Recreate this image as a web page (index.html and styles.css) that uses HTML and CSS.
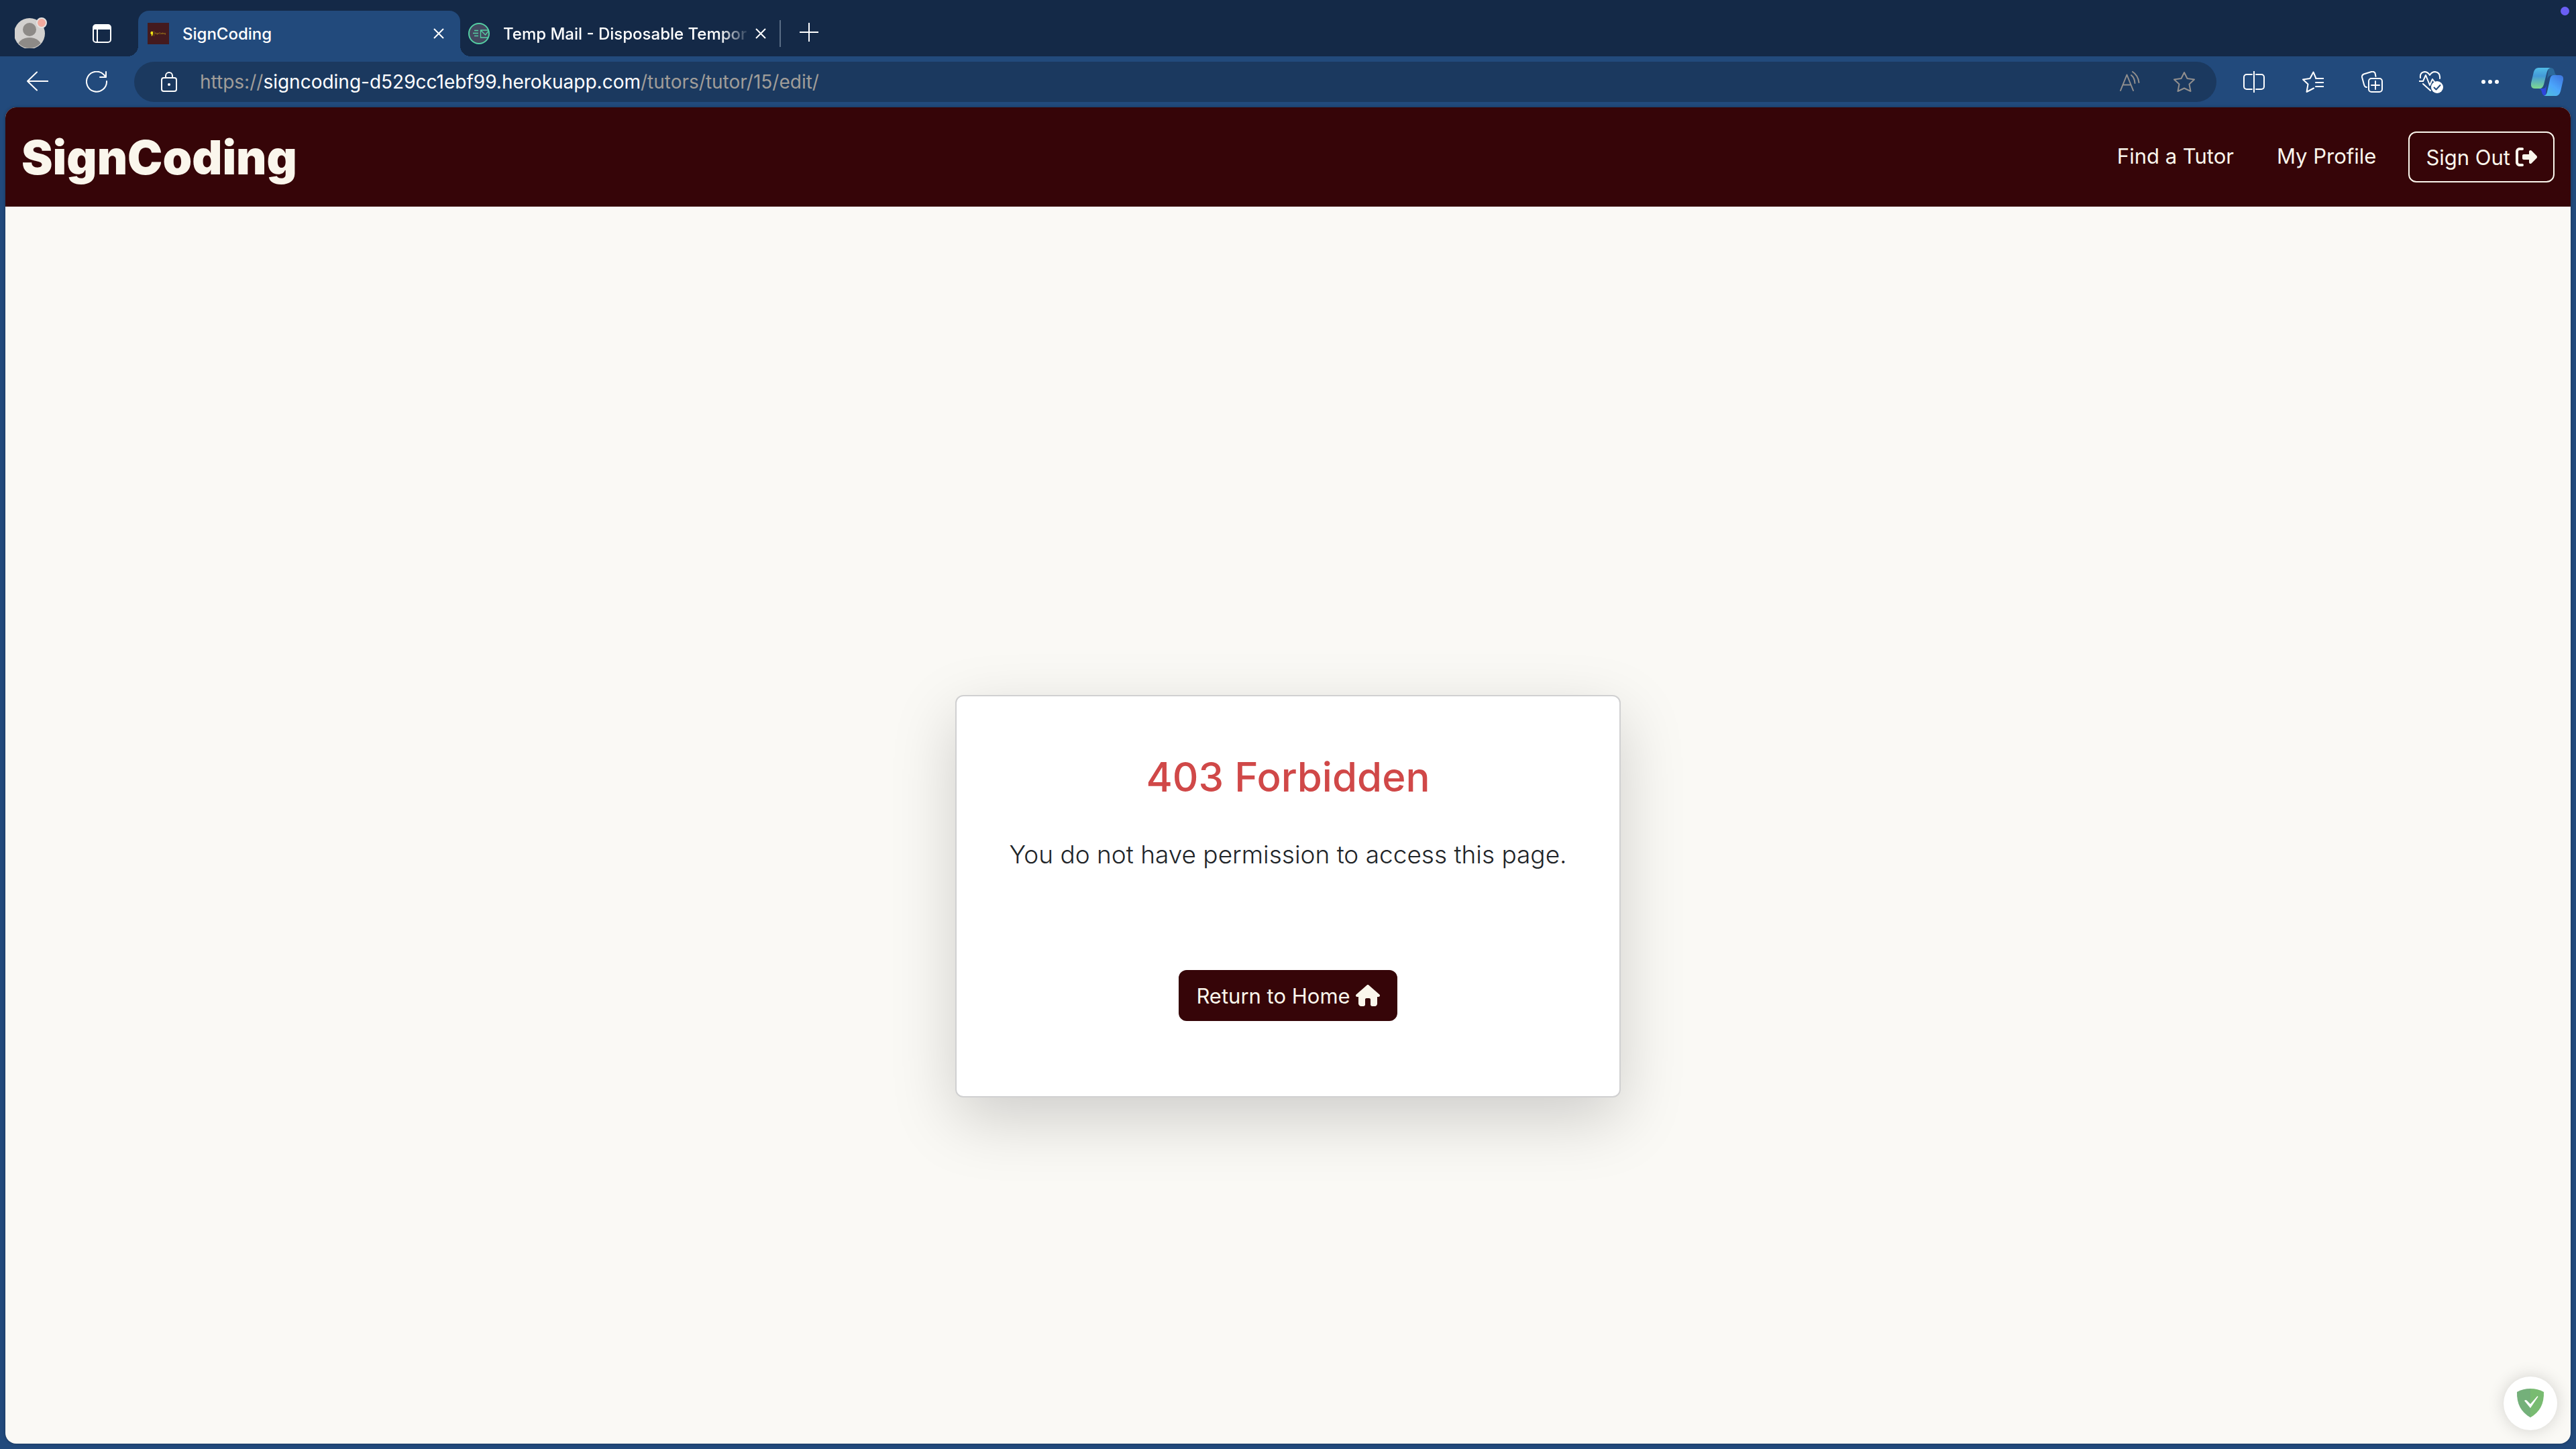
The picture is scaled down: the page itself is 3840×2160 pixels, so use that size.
FILE: index.html
```html
<!DOCTYPE html>
<html lang="en">
<head>
<meta charset="utf-8">
<meta name="viewport" content="width=device-width, initial-scale=1">
<title>SignCoding</title>
<link rel="stylesheet" href="styles.css">
</head>
<body>
<div class="tab-strip">
  <button class="profile" aria-label="Profile">
    <svg width="48" height="48" viewBox="0 0 48 48">
      <defs><clipPath id="face"><circle cx="22" cy="26" r="22"/></clipPath></defs>
      <circle cx="22" cy="26" r="23" fill="#d2d0ce"/>
      <g clip-path="url(#face)" fill="#8d8a87"><circle cx="22" cy="20" r="10"/><ellipse cx="22" cy="46" rx="18" ry="14"/></g>
      <circle cx="40" cy="10" r="7" fill="#f1a99d" stroke="#e4e2e0" stroke-width="2"/>
    </svg>
  </button>
  <button class="workspaces" aria-label="Tab actions">
    <svg width="28" height="28" viewBox="0 0 28 28"><rect x="1" y="1" width="26" height="26" rx="4" fill="none" stroke="#fff" stroke-width="2"/><path d="M1 8V5a4 4 0 0 1 4-4h18a4 4 0 0 1 4 4v3z" fill="#fff"/><path d="M7 8v19" stroke="#fff" stroke-width="2"/></svg>
  </button>
  <div class="tab tab-active">
    <svg class="favicon" width="32" height="32" viewBox="0 0 32 32"><rect width="32" height="32" fill="#441a1e"/><path d="M4.500 14q2-2 3.500-.5v3l-1 3H5.500l.5-2-1.500-1z" fill="#f5ea14"/><path d="M9.500 12v8" stroke="#8a6b18" stroke-width=".6"/><text x="10.500" y="17" class="favicon-text">SignCoding</text></svg>
    <span class="tab-title">SignCoding</span>
    <button class="close" aria-label="Close tab"><svg width="16" height="16" viewBox="0 0 16 16"><path d="M1 1l14 14M15 1L1 15"/></svg></button>
  </div>
  <div class="tab">
    <svg class="favicon" width="32" height="32" viewBox="0 0 32 32"><circle cx="16" cy="16" r="15" fill="#43485f" stroke="#55cfa4" stroke-width="2"/><path d="M9 11.500h6M7 15.500h8M9 19.500h6M30 11H18.500v11H30M18.500 11l7 7 5-6" fill="none" stroke="#55cfa4" stroke-width="1.300"/></svg>
    <span class="tab-title tab-title-fade">Temp Mail - Disposable Tempor</span>
    <button class="close" aria-label="Close tab"><svg width="16" height="16" viewBox="0 0 16 16"><path d="M1 1l14 14M15 1L1 15"/></svg></button>
  </div>
  <button class="new-tab" aria-label="New tab"><svg width="28" height="28" viewBox="0 0 28 28"><path d="M14 0v28M0 14h28"/></svg></button>
  <span class="status-dot"></span>
</div>

<div class="toolbar">
  <button class="tool" aria-label="Back"><svg width="32" height="32" viewBox="0 0 32 32"><path d="M15 1.500L1 15l14 13.500M1 15h31"/></svg></button>
  <button class="tool" aria-label="Reload"><svg width="32" height="32" viewBox="0 0 32 32"><path d="M31 15a15 15 0 1 1-4-9.500L30 9M30 1v8h-9"/></svg></button>
  <div class="omnibox">
    <svg width="24" height="30" viewBox="0 0 24 30"><rect x="1" y="9" width="22" height="20" rx="3"/><path d="M7 9V6a5 5 0 0 1 10 0v3"/><circle cx="12" cy="19" r="2" fill="#fff" stroke="none"/></svg>
    <div class="url" role="textbox" aria-label="Address bar"><span class="dim">https://</span><span>signcoding-d529cc1ebf99.herokuapp.com</span><span class="dim">/tutors/tutor/15/edit/</span></div>
    <button class="omni-action" aria-label="Read aloud"><svg width="32" height="32" viewBox="0 0 32 32"><path d="M1 29L10.500 5.500 20 29M4.500 20.500h12M17 6q5 4 5.500 12M19 1q8 5 9.500 16"/></svg></button>
    <button class="omni-action" aria-label="Add to favorites"><svg width="32" height="32" viewBox="0 0 32 32"><path d="M16 2l4.500 9L31 12.500l-7.500 7L25.500 30 16 25.500 6.500 30l2-10.500L1 12.500 11.500 11z"/></svg></button>
  </div>
  <button class="tool" aria-label="Split screen"><svg width="32" height="32" viewBox="0 0 32 32"><path d="M16 0v32M13 5H5a4 4 0 0 0-4 4v14a4 4 0 0 0 4 4h8M19 5h8a4 4 0 0 1 4 4v14a4 4 0 0 1-4 4h-8"/></svg></button>
  <button class="tool" aria-label="Favorites"><svg width="32" height="32" viewBox="0 0 32 32"><path d="M20.500 11l-4-9.500-5 9.500-10.500 1.500 7.500 7-2 11.500 10.500-5.500M20 11h12M20 17h12M20 23h12"/></svg></button>
  <button class="tool" aria-label="Collections"><svg width="32" height="32" viewBox="0 0 32 32"><rect x="11" y="11" width="20" height="20" rx="4"/><path d="M21 15v12M15 21h12M8 24q-3 0-4-4L1 9q-.500-3 2.500-4.500L15 1q4-1 5.500 2l1 5"/></svg></button>
  <button class="tool" aria-label="Browser essentials"><svg width="36" height="36" viewBox="0 0 36 36"><path d="M2 12Q1 4 8 3q5 0 8 5 3-5 8-5 8 1 7 10M0 17h6l4-9 6 15 4-9 3 4M6 21l11 10"/><circle cx="27" cy="26" r="9" fill="#fff" stroke="none"/><path d="M22.500 26.500l3 3 6-6.500" class="check"/></svg></button>
  <button class="tool" aria-label="Settings and more"><svg width="28" height="28" viewBox="0 0 28 28"><g fill="#fff" stroke="none"><circle cx="4" cy="14" r="3"/><circle cx="14" cy="14" r="3"/><circle cx="24" cy="14" r="3"/></g></svg></button>
  <button class="copilot" aria-label="Copilot">
    <svg width="48" height="42" viewBox="0 0 48 42">
      <defs>
        <linearGradient id="cg" x2="0" y2="1"><stop stop-color="#51bce6"/><stop offset=".4" stop-color="#449ad8"/><stop offset="1" stop-color="#7fd98f"/></linearGradient>
        <linearGradient id="cb" x1="1" x2=".3" y2="1"><stop stop-color="#3d72dc"/><stop offset=".6" stop-color="#4ba5fb"/><stop offset="1" stop-color="#50b9e2"/></linearGradient>
      </defs>
      <path d="M26 0h3q5 0 6 6 1 5 4 5h-8q-5 0-7 6z" fill="#2c6a9b"/>
      <path d="M10 31h8q3 0 4-3l1-4-1 18q-5 0-6-6-1-5-6-5z" fill="#2e45dc"/>
      <path d="M11 0h18q-4 1-5.500 7L19 25q-2 6-6 6H6q-7 0-6-8L4 6q2-6 7-6z" fill="url(#cg)"/>
      <path d="M33 11h9q7 0 6 7l-4 17q-2 7-7 7H19q4-1 5-6l4-18q1-7 5-7z" fill="url(#cb)"/>
    </svg>
  </button>
</div>

<div class="viewport">
  <header class="site-header">
    <a class="brand" href="#">SignCoding</a>
    <nav class="site-nav">
      <a class="nav-link" href="#">Find a Tutor</a>
      <a class="nav-link" href="#">My Profile</a>
      <button class="btn btn-outline">Sign Out <svg width="32" height="32" viewBox="0 0 512 512"><path d="M377.900 105.900L500.700 228.700c7.200 7.200 11.300 17.100 11.300 27.300s-4.100 20.100-11.300 27.300L377.900 406.100c-6.400 6.400-15 9.900-24 9.900c-18.700 0-33.900-15.200-33.900-33.900l0-62.100-128 0c-17.700 0-32-14.300-32-32l0-64c0-17.700 14.300-32 32-32l128 0 0-62.100c0-18.700 15.200-33.900 33.900-33.900c9 0 17.600 3.600 24 9.900zM160 96L96 96c-17.700 0-32 14.300-32 32l0 256c0 17.700 14.300 32 32 32l64 0c17.700 0 32 14.300 32 32s-14.300 32-32 32l-64 0c-53 0-96-43-96-96L0 128C0 75 43 32 96 32l64 0c17.700 0 32 14.300 32 32s-14.300 32-32 32z"/></svg></button>
    </nav>
  </header>
  <main class="content">
    <section class="card">
      <h1>403 Forbidden</h1>
      <p>You do not have permission to access this page.</p>
      <a class="btn btn-solid" href="#">Return to Home <svg width="36" height="32" viewBox="0 0 576 512"><path d="M575.800 255.500c0 18-15 32.100-32 32.100h-32l.700 160.200c0 35.200-24 64.200-56 64.200H392c-22 0-40-18-40-40V352c0-17.700-14.300-32-32-32h-64c-17.700 0-32 14.300-32 32v120c0 22-18 40-40 40h-56c-32 0-64-29-64-64V287.600H32c-18 0-32-14-32-32.100 0-9 3-17 10-24L266.400 8c7-7 15-8 22-8s15 2 21 7l255.400 224.500c8 7 12 15 11 24z"/></svg></a>
    </section>
  </main>
  <button class="guard" aria-label="Protection">
    <svg width="42" height="44" viewBox="0 0 42 44"><path d="M21 0Q10 0 1 5q-1 26 20 38z" fill="#74b07a"/><path d="M21 0q11 0 20 5 1 26-20 38z" fill="#79bb71"/><path d="M12 18q2-2 4 0l5 5L31.500 11l1 1L21 29z" fill="#fff"/></svg>
  </button>
</div>
</body>
</html>
```

FILE: styles.css
```css
* { box-sizing: border-box; }

body {
  margin: 0;
  min-height: 100vh;
  display: flex;
  flex-direction: column;
  background: #224a7c;
  color: #fff;
  font-family: Inter, "Liberation Sans", sans-serif;
}

button {
  border: 0;
  padding: 0;
  background: none;
  color: inherit;
  font: inherit;
  display: flex;
  align-items: center;
  justify-content: center;
}

a { color: inherit; text-decoration: none; }
svg { flex: none; display: block; }

/* Tab strip */
.tab-strip {
  position: relative;
  display: flex;
  align-items: stretch;
  height: 84px;
  padding: 16px 0 0 22px;
  background: #142947;
}
.profile { width: 48px; padding-bottom: 4px; }
.workspaces { width: 28px; margin: 0 40px 0 68px; }
.tab {
  display: flex;
  align-items: center;
  width: 480px;
  padding: 0 24px 0 12px;
  font-size: 24px;
  font-weight: 500;
}
.tab-active {
  position: relative;
  padding: 0 24px 0 14px;
  background: #224a7c;
  border-radius: 16px 16px 0 0;
}
.tab-active::before,
.tab-active::after {
  content: "";
  position: absolute;
  bottom: 0;
  width: 16px;
  height: 16px;
}
.tab-active::before { right: 100%; background: radial-gradient(circle at 0 0, transparent 16px, #224a7c 16px); }
.tab-active::after { left: 100%; background: radial-gradient(circle at 100% 0, transparent 16px, #224a7c 16px); }
.favicon-text { font: 3px Inter, sans-serif; fill: #c8a816; }
.tab-title {
  flex: 1;
  min-width: 0;
  margin: 0 16px 0 20px;
  white-space: nowrap;
}
.tab-title-fade { margin-right: 8px; mask-image: linear-gradient(to right, #000 88%, transparent); }
.close svg, .new-tab svg { stroke: #fff; stroke-width: 2; }
.new-tab {
  width: 74px;
  height: 40px;
  margin-top: 14px;
  padding: 0 0 4px 12px;
  margin-left: -4px;
  border-left: 2px solid #5a6d86;
}
.status-dot {
  position: absolute;
  top: 10px;
  right: 10px;
  width: 13px;
  height: 13px;
  border-radius: 50%;
  background: #6a5ff5;
}

/* Toolbar */
.toolbar {
  display: flex;
  align-items: center;
  height: 76px;
  padding: 0 2px 0 12px;
}
.toolbar svg { fill: none; stroke: #fff; stroke-width: 2; stroke-linejoin: round; stroke-linecap: round; }
.toolbar .check { stroke: #224a7c; }
.tool { width: 88px; height: 60px; }
.copilot { width: 82px; height: 60px; }
.toolbar .copilot svg { stroke: none; }
.omnibox {
  flex: 1;
  display: flex;
  align-items: center;
  height: 60px;
  margin: 0 12px;
  padding: 0 8px 0 40px;
  border-radius: 30px;
  background: #1b395f;
}
.url { flex: 1; margin-left: 34px; font-size: 28px; white-space: nowrap; }
.dim { color: #a09d99; }
.omni-action { width: 80px; height: 60px; }
.omnibox .omni-action svg { stroke: #918f8e; }

/* Page */
.viewport {
  position: relative;
  flex: 1;
  display: flex;
  flex-direction: column;
  margin: 0 8px 8px;
  border-radius: 16px;
  overflow: hidden;
  background: #faf9f5;
  box-shadow: 0 0 4px rgba(0, 0, 0, 0.3);
}
.site-header {
  display: flex;
  align-items: center;
  justify-content: space-between;
  height: 148px;
  padding: 0 24px;
  background: #360508;
  color: #faf6ec;
}
.brand { font-size: 70px; font-weight: 900; }
.site-nav { display: flex; align-items: center; font-size: 31px; }
.nav-link { padding: 0 32px 4px; }
.btn {
  display: inline-flex;
  align-items: center;
  gap: 8px;
  height: 76px;
  padding: 0 24px;
  border: 2px solid #faf6ec;
  border-radius: 12px;
  font-size: 31px;
  white-space: nowrap;
}
.btn svg { fill: #faf6ec; }
.btn-outline { margin-left: 16px; }
.btn-solid { background: #360508; border-color: #360508; color: #faf6ec; }

.content {
  flex: 1;
  display: flex;
  align-items: center;
  justify-content: center;
  padding-top: 212px;
}
.card {
  display: flex;
  flex-direction: column;
  align-items: center;
  width: 992px;
  max-width: 100%;
  padding: 82px 24px 112px;
  border: 2px solid #d0d0d1;
  border-radius: 12px;
  background: #fff;
  color: #212529;
  box-shadow: 0 32px 96px rgba(0, 0, 0, 0.175);
}
.card h1 { margin: 0 0 48px; font-size: 60px; line-height: 76px; font-weight: 500; color: #d04848; }
.card p { margin: 0 0 142px; font-size: 37px; line-height: 60px; font-weight: 300; }

.guard {
  position: absolute;
  right: 20px;
  bottom: 20px;
  width: 80px;
  height: 80px;
  border-radius: 50%;
  background: #fff;
  box-shadow: 0 0 24px rgba(0, 0, 0, 0.16);
}
```
